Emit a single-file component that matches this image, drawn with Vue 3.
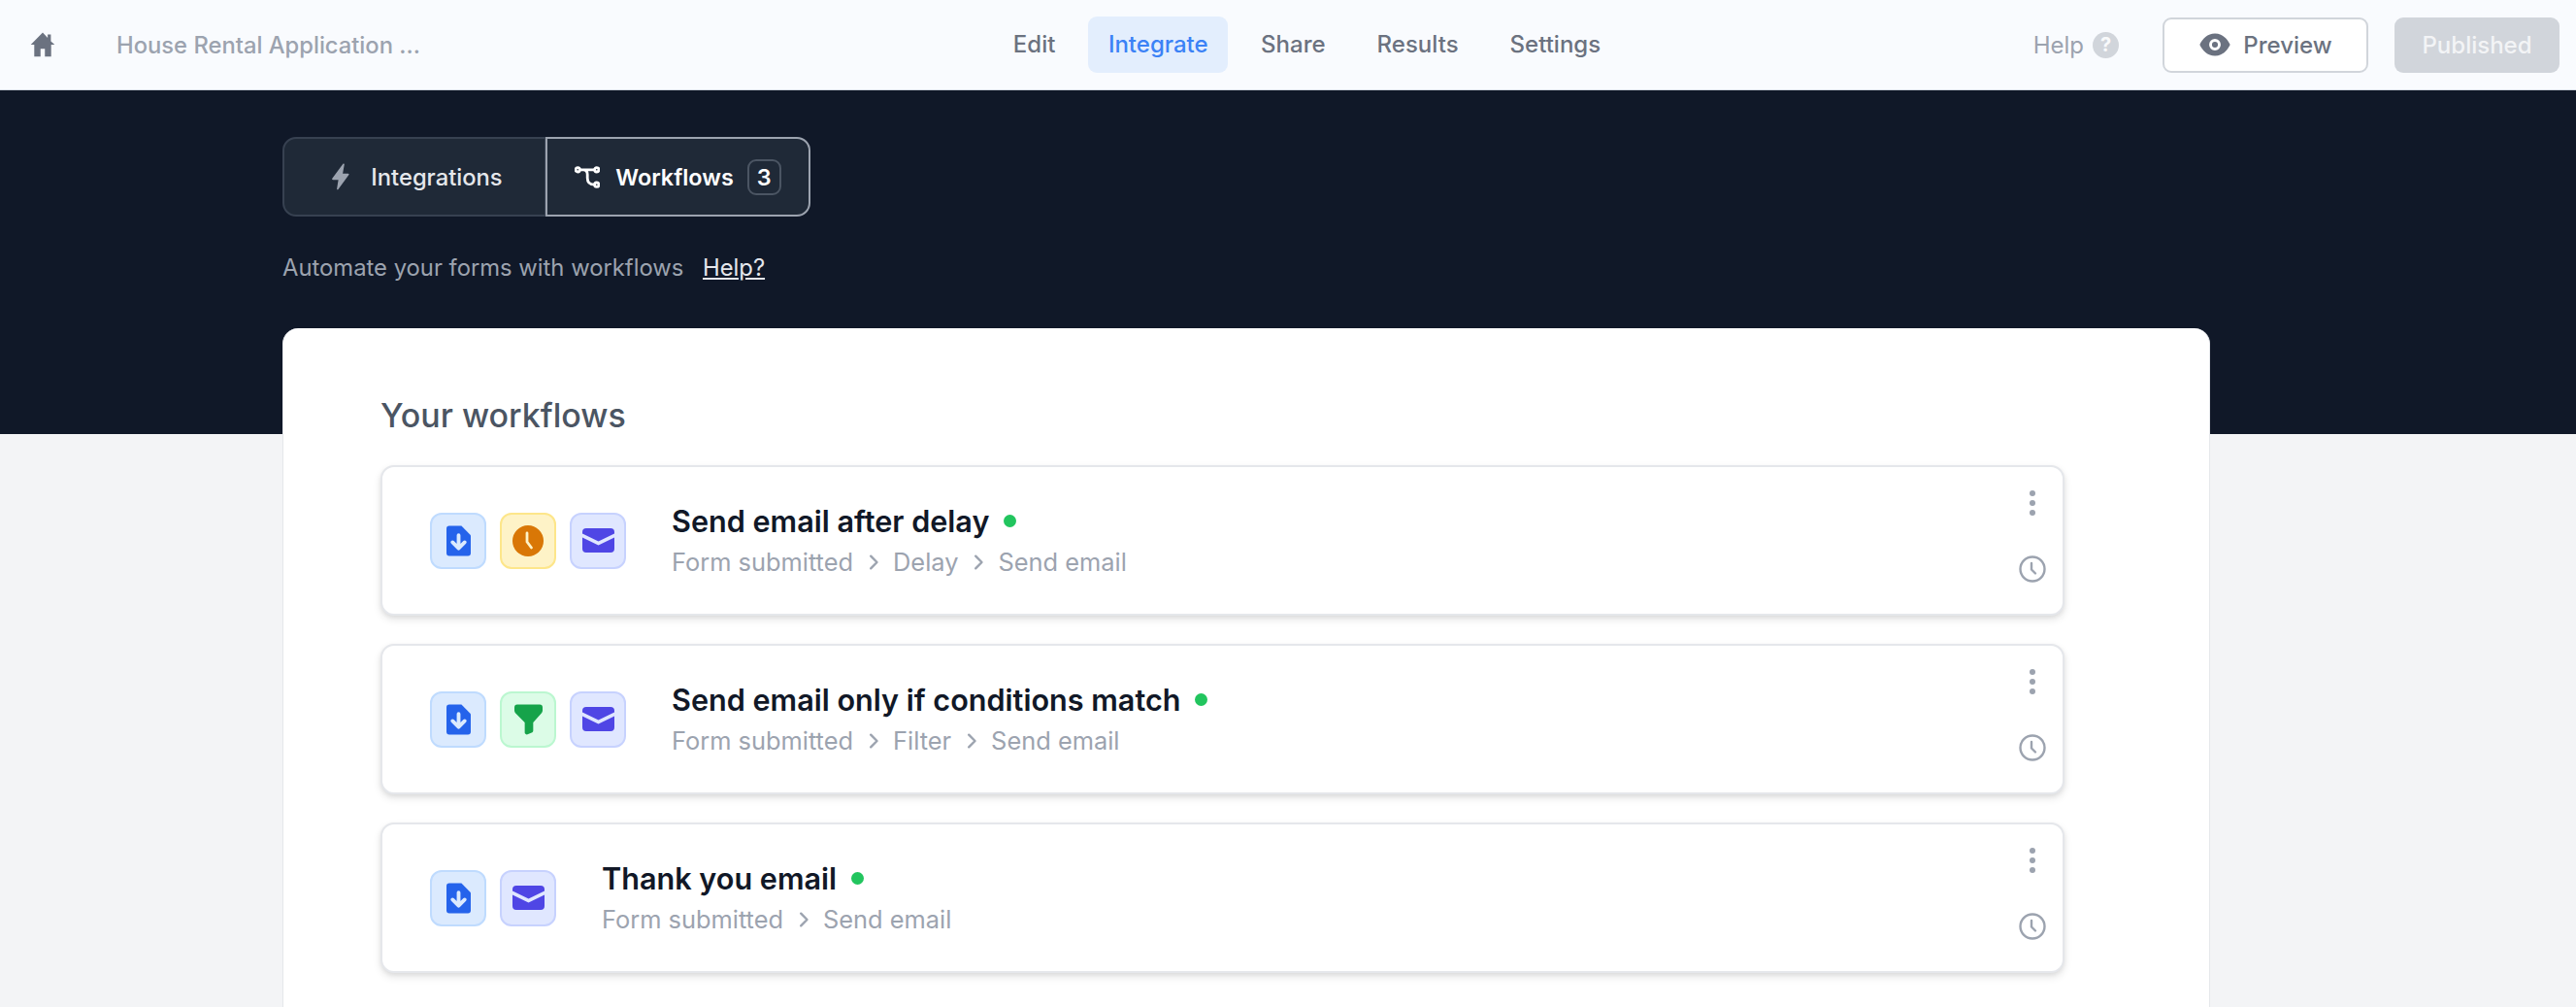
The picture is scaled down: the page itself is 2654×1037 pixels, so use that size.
<template>
  <div class="app">
    <header class="topbar">
      <div class="left">
        <svg class="home" viewBox="0 0 20 20"><path d="M10 1.600 1.800 10h2.400v8.200h4.300v-5.400h3v5.400h4.300V10h2.400L15.600 7.600V3h-2.200v2.400z" /></svg>
        <span class="form-name">House Rental Application ...</span>
      </div>
      <nav class="menu">
        <a v-for="item in menu" :key="item" class="menu-item" :class="{ active: item === 'Integrate' }">{{ item }}</a>
      </nav>
      <div class="right">
        <span class="help">Help <span class="help-mark">?</span></span>
        <button class="preview">
          <svg viewBox="0 0 20 20" class="eye"><path fill-rule="evenodd" d="M10 3.200c4.500 0 7.600 3.300 9.200 6.800-1.600 3.500-4.700 6.800-9.200 6.800S2.400 13.500.8 10C2.400 6.500 5.500 3.200 10 3.200zm0 3.300a3.500 3.500 0 1 0 0 7 3.500 3.500 0 0 0 0-7zm0 1.700a1.800 1.800 0 1 1 0 3.600 1.800 1.800 0 0 1 0-3.600z" /></svg>
          Preview
        </button>
        <button class="published">Published</button>
      </div>
    </header>

    <main class="page">
      <div class="content">
        <div class="tabs">
          <button class="tab">
            <svg viewBox="0 0 20 20" class="bolt"><path d="M11.600 1.200 4.200 11.200c-.3.400 0 .9.500.9h3.700l-1 6.200c-.1.500.5.800.9.400l7.300-10c.3-.4 0-.9-.5-.9h-3.700l1.100-6.200c.1-.5-.5-.8-.9-.4z" /></svg>
            Integrations
          </button>
          <button class="tab current">
            <svg viewBox="0 0 26 23" class="flow" fill="none" stroke="currentColor" stroke-width="2.800" stroke-linecap="round">
              <circle cx="3.200" cy="3.800" r="2.200" />
              <circle cx="22.800" cy="3.800" r="2.200" />
              <circle cx="22.800" cy="19.200" r="2.200" />
              <path d="M5.500 3.800h15M9 3.800c3 0 4.200 1.800 4.200 5v3.500c0 4.500 2.500 6.900 7.300 6.900" />
            </svg>
            Workflows
            <span class="count">3</span>
          </button>
        </div>
        <p class="intro">Automate your forms with workflows <a class="intro-link">Help?</a></p>

        <section class="panel">
          <h2>Your workflows</h2>
          <article v-for="flow in workflows" :key="flow.name" class="flow-card">
            <div class="steps">
              <span v-for="step in flow.icons" :key="step" class="step" :class="step">
                <svg v-if="step === 'file'" viewBox="0 0 26 32"><path d="M3 0h13l10 10v19a3 3 0 0 1-3 3H3a3 3 0 0 1-3-3V3a3 3 0 0 1 3-3z" fill="#2563eb" /><path d="M13 10v13M6.500 17.500 13 24l6.500-6.500" fill="none" stroke="#dbeafe" stroke-width="4" stroke-linecap="round" stroke-linejoin="round" /></svg>
                <svg v-else-if="step === 'clock'" viewBox="0 0 32 32"><circle cx="16" cy="16" r="16" fill="#d97706" /><path d="M15 8v9l4.500 6" fill="none" stroke="#fef3c7" stroke-width="2.800" stroke-linecap="round" stroke-linejoin="round" /></svg>
                <svg v-else-if="step === 'filter'" viewBox="0 0 30 32"><path d="M3 0h24a3 3 0 0 1 3 3v3.500c0 1-.4 1.800-1 2.500L20 19v9c0 .8-.4 1.400-1 1.800l-5 2c-1 .4-3-.3-3-1.800V19L1 9C.4 8.300 0 7.500 0 6.500V3a3 3 0 0 1 3-3z" fill="#16a34a" /></svg>
                <svg v-else viewBox="0 0 33 25"><path d="M4 0h25a4 4 0 0 1 4 4v1.500L16.500 13.500 0 5.500V4a4 4 0 0 1 4-4z" fill="#4f46e5" /><path d="M0 9.500 16.500 17.500 33 9.500V21a4 4 0 0 1-4 4H4a4 4 0 0 1-4-4z" fill="#4f46e5" /></svg>
              </span>
            </div>
            <div class="info">
              <div class="title-row">
                <span class="title">{{ flow.name }}</span>
                <span class="dot"></span>
              </div>
              <div class="path">
                <template v-for="(part, i) in flow.path" :key="part">
                  <svg v-if="i > 0" viewBox="0 0 10 14" class="chevron"><path d="M3 2.500 7.500 7 3 11.500" fill="none" stroke="currentColor" stroke-width="1.700" stroke-linecap="round" stroke-linejoin="round" /></svg>
                  <span>{{ part }}</span>
                </template>
              </div>
            </div>
            <div class="actions">
              <span class="kebab"><i></i><i></i><i></i></span>
              <svg viewBox="0 0 28 28" class="history" fill="none" stroke="#9ca3af" stroke-width="2.400" stroke-linecap="round" stroke-linejoin="round"><circle cx="14" cy="14" r="12.500" /><path d="M13 8v6.500l4 4" /></svg>
            </div>
          </article>
        </section>
      </div>
    </main>
  </div>
</template>

<script setup>
const menu = ['Edit', 'Integrate', 'Share', 'Results', 'Settings']

const workflows = [
  { name: 'Send email after delay', icons: ['file', 'clock', 'mail'], path: ['Form submitted', 'Delay', 'Send email'] },
  { name: 'Send email only if conditions match', icons: ['file', 'filter', 'mail'], path: ['Form submitted', 'Filter', 'Send email'] },
  { name: 'Thank you email', icons: ['file', 'mail'], path: ['Form submitted', 'Send email'] }
]
</script>

<style>
html, body { margin: 0; background: #f3f4f6; overflow: hidden; }
</style>

<style scoped>
.app {
  height: 1037px;
  overflow: hidden;
  font-family: Inter, "Liberation Sans", sans-serif;
  color: #6b7280;
}

.topbar {
  height: 92px;
  display: grid;
  grid-template-columns: 1fr auto 1fr;
  align-items: center;
  background: #f9fbfe;
  border-bottom: 1px solid #d8dde5;
}

.left { display: flex; align-items: center; padding-left: 29px; }
.home { width: 30px; height: 30px; fill: #6b7280; }
.form-name { margin-left: 61px; font-size: 23.75px; color: #9ca3af; font-weight: 500; }

.menu { display: flex; align-items: center; gap: 15px; padding-left: 39px; }
.menu-item {
  padding: 16px 19px;
  border-radius: 9px;
  font-size: 24px;
  line-height: 26px;
  font-weight: 500;
  color: #6b7280;
}
.menu-item.active { padding: 16px 20.5px; background: #e3eefd; color: #3b82f6; }

.right { display: flex; align-items: center; justify-content: flex-end; padding-right: 17px; }
.help { display: flex; align-items: center; gap: 9px; font-size: 24px; color: #9ca3af; margin-right: 45px; }
.help-mark {
  width: 27px;
  height: 27px;
  border-radius: 50%;
  background: #d1d5db;
  color: #f9fafb;
  font-size: 20px;
  font-weight: 700;
  display: flex;
  align-items: center;
  justify-content: center;
}
.preview {
  width: 212px;
  height: 57px;
  margin-right: 27px;
  border: 2px solid #d1d5db;
  border-radius: 9px;
  background: #fff;
  color: #6b7280;
  font: 500 24px Inter, sans-serif;
  display: flex;
  align-items: center;
  justify-content: center;
  gap: 12px;
}
.eye { width: 34px; height: 34px; fill: #6b7280; }
.published {
  width: 170px;
  height: 57px;
  border: 0;
  border-radius: 9px;
  background: #d1d5db;
  color: #f3f4f6;
  font: 500 24px Inter, sans-serif;
}

.page {
  background: linear-gradient(#101828 354px, #f3f4f6 354px);
  height: 944px;
}
.content { width: 1986px; margin-left: 291px; padding-top: 48px; }

.tabs { display: inline-flex; height: 82px; }
.tab {
  display: flex;
  align-items: center;
  justify-content: center;
  gap: 16px;
  background: #1f2937;
  border: 2px solid #374151;
  color: #e5e7eb;
  font: 500 23.75px Inter, sans-serif;
  width: 272px;
  border-radius: 14px 0 0 14px;
}
.tab.current {
  width: 273px;
  gap: 14px;
  margin-left: -1px;
  border-color: #9ca3af;
  color: #fff;
  font-weight: 600;
  font-size: 23.4px;
  border-radius: 0 14px 14px 0;
}
.bolt { width: 30px; height: 30px; fill: #9ca3af; }
.flow { width: 26px; height: 23px; margin-right: 2px; }
.count {
  width: 35px;
  height: 37px;
  border: 2px solid #4b5563;
  border-radius: 9px;
  display: flex;
  align-items: center;
  justify-content: center;
  box-sizing: border-box;
}

.intro { margin: 38px 0 0; font-size: 23.8px; line-height: 30px; color: #9ca3af; }
.intro-link { margin-left: 13px; color: #e5e7eb; text-decoration: underline; }

.panel {
  margin-top: 47px;
  height: 800px;
  box-sizing: border-box;
  padding: 66px 149px 0 100px;
  background: #fff;
  border-radius: 16px 16px 0 0;
  border: 1px solid #e5e7eb;
  border-width: 0 1px;
}
h2 { margin: 0 0 27px; font-size: 34px; line-height: 48px; font-weight: 500; color: #4b5563; }

.flow-card {
  position: relative;
  height: 155px;
  box-sizing: border-box;
  margin-bottom: 29px;
  display: flex;
  align-items: center;
  padding-left: 49px;
  background: #fff;
  border: 2px solid #e5e7eb;
  border-radius: 14px;
  box-shadow: 0 4px 8px rgba(0, 0, 0, .1), 0 2px 4px rgba(0, 0, 0, .06);
}
.steps { display: flex; gap: 14px; }
.step {
  width: 58px;
  height: 58px;
  box-sizing: border-box;
  border: 2px solid;
  border-radius: 12px;
  display: flex;
  align-items: center;
  justify-content: center;
}
.step.file { background: #dbeafe; border-color: #bfdbfe; }
.step.file svg { width: 25px; height: 32px; }
.step.clock { background: #fef3c7; border-color: #fde68a; }
.step.clock svg { width: 32px; height: 32px; }
.step.filter { background: #dcfce7; border-color: #bbf7d0; }
.step.filter svg { width: 29px; height: 32px; }
.step.mail { background: #e0e7ff; border-color: #c7d2fe; }
.step.mail svg { width: 33px; height: 25px; }

.info { margin-left: 47px; }
.title-row { display: flex; align-items: center; gap: 15px; }
.title { font-size: 30.6px; line-height: 40px; font-weight: 600; color: #111827; }
.dot { width: 13px; height: 13px; border-radius: 50%; background: #22c55e; }
.path { display: flex; align-items: center; gap: 13.5px; margin-top: 4px; font-size: 25.4px; line-height: 36px; color: #9ca3af; }
.chevron { width: 14px; height: 20px; }

.actions {
  position: absolute;
  top: 0;
  right: 16px;
  bottom: 0;
  width: 30px;
  display: flex;
  flex-direction: column;
  align-items: center;
}
.kebab { margin-top: 24px; display: flex; flex-direction: column; gap: 4px; }
.kebab i { width: 6px; height: 6px; border-radius: 50%; background: #9ca3af; }
.history { width: 28px; height: 28px; margin-top: 41px; }
</style>
